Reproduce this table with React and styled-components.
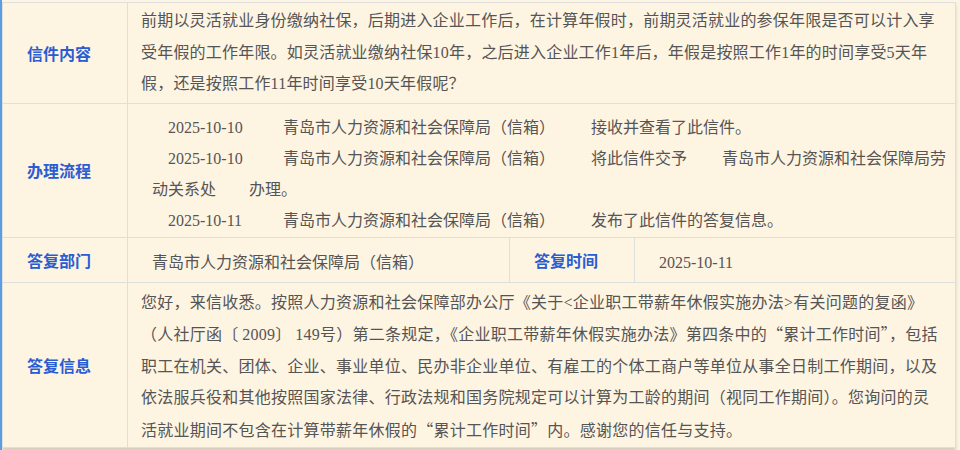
import React from "react";
import styled, { createGlobalStyle } from "styled-components";

const GlobalStyle = createGlobalStyle`
  html, body {
    margin: 0;
    padding: 0;
    background: #fdf5e8;
  }
  body {
    font-family: "Liberation Serif", "Noto Sans CJK SC", serif;
  }
`;

const Frame = styled.div`
  width: 960px;
  height: 450px;
  box-sizing: border-box;
  overflow: hidden;
  padding-top: 2px;
  border-left: 2px solid #5b9de2;
  background: #fef4e2;
`;

const Table = styled.table`
  width: 953px;
  table-layout: fixed;
  border-collapse: collapse;
  background: #fef4e2;
  border-left: 1px solid #d6e3f2;
  box-shadow: 0 3px 3px rgba(0, 0, 0, 0.16);
`;

const Label = styled.th`
  border: 1px solid #dedede;
  color: #2a5dd2;
  font-size: 16px;
  font-weight: 700;
  text-align: center;
  vertical-align: middle;
  padding: 0 12px 0 0;
`;

const Cell = styled.td`
  border: 1px solid #dedede;
  color: #555;
  font-size: 16px;
  line-height: ${(p) => p.$lh || "31.5px"};
  letter-spacing: ${(p) => p.$ls || "0"};
  padding: ${(p) => p.$pad};
  text-align: left;
  vertical-align: middle;
  white-space: nowrap;
`;

const FlowCell = styled(Cell)`
  white-space: normal;
`;

const Quote = styled.span`
  font-family: "Noto Sans CJK SC", sans-serif;
`;

const Bracket = styled.span`
  letter-spacing: 4px;
`;

const Entry = styled.div`
  text-indent: 16px;
`;

const Date = styled.span`
  display: inline-block;
  width: 115px;
  text-indent: 0;
`;

const Org = styled.span`
  display: inline-block;
  width: 308px;
  text-indent: 0;
`;

const Gap = styled.span`
  display: inline-block;
  width: ${(p) => p.$w}px;
`;

const ORG = "青岛市人力资源和社会保障局（信箱）";

const steps = [
  { date: "2025-10-10", action: <>接收并查看了此信件。</> },
  {
    date: "2025-10-10",
    action: (
      <>
        将此信件交予<Gap $w={35} />青岛市人力资源和社会保障局劳动关系处<Gap $w={33} />办理。
      </>
    ),
  },
  { date: "2025-10-11", action: <>发布了此信件的答复信息。</> },
];

export default function App() {
  return (
    <>
      <GlobalStyle />
      <Frame>
        <Table>
          <colgroup>
            <col style={{ width: 125 }} />
            <col style={{ width: 382 }} />
            <col style={{ width: 125 }} />
            <col style={{ width: 321 }} />
          </colgroup>
          <tbody>
            <tr>
              <Label>信件内容</Label>
              <Cell colSpan={3} $pad="2px 5px 3px 13px" $ls="0.2px">
                前期以灵活就业身份缴纳社保，后期进入企业工作后，在计算年假时，前期灵活就业的参保年限是否可以计入享
                <br />
                受年假的工作年限。如灵活就业缴纳社保10年，之后进入企业工作1年后，年假是按照工作1年的时间享受5天年
                <br />
                假，还是按照工作11年时间享受10天年假呢？
              </Cell>
            </tr>
            <tr>
              <Label>办理流程</Label>
              <FlowCell colSpan={3} $pad="8px 5px 1px 24px" $lh="31px">
                {steps.map((s, i) => (
                  <Entry key={i}>
                    <Date>{s.date}</Date>
                    <Org>{ORG}</Org>
                    {s.action}
                  </Entry>
                ))}
              </FlowCell>
            </tr>
            <tr>
              <Label>答复部门</Label>
              <Cell $pad="9px 5px 4px 24px" $lh="31px">
                {ORG}
              </Cell>
              <Label>答复时间</Label>
              <Cell $pad="9px 5px 4px 24px" $lh="31px">
                2025-10-11
              </Cell>
            </tr>
            <tr>
              <Label>答复信息</Label>
              <Cell colSpan={3} $pad="4px 5px 1px 13px" $ls="0.25px">
                您好，来信收悉。按照人力资源和社会保障部办公厅《关于&lt;企业职工带薪年休假实施办法&gt;有关问题的复函》
                <br />
                （人社厅函<Bracket>〔</Bracket>2009<Bracket>〕</Bracket>149号）第二条规定，《企业职工带薪年休假实施办法》第四条中的<Quote>“</Quote>累计工作时间<Quote>”</Quote>，包括
                <br />
                职工在机关、团体、企业、事业单位、民办非企业单位、有雇工的个体工商户等单位从事全日制工作期间，以及
                <br />
                依法服兵役和其他按照国家法律、行政法规和国务院规定可以计算为工龄的期间（视同工作期间）。您询问的灵
                <br />
                活就业期间不包含在计算带薪年休假的<Quote>“</Quote>累计工作时间<Quote>”</Quote>内。感谢您的信任与支持。
              </Cell>
            </tr>
          </tbody>
        </Table>
      </Frame>
    </>
  );
}
